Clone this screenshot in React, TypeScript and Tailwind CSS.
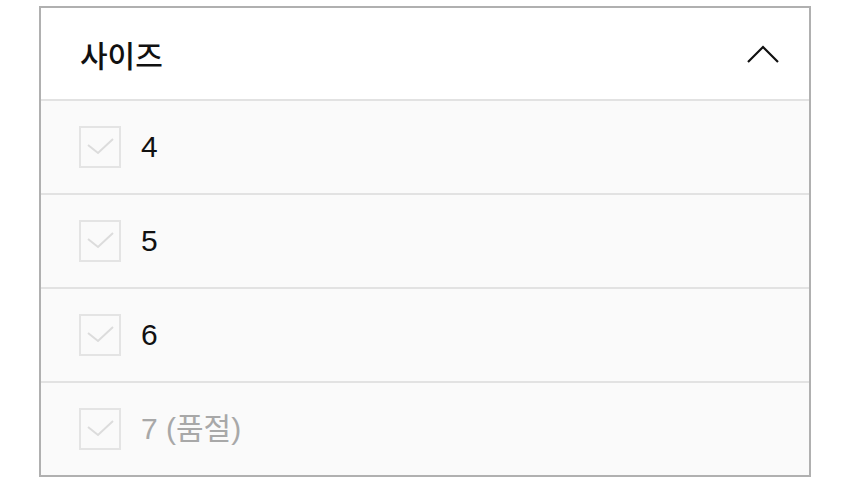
import React from 'react'

const sizes = [
    { label: '4', soldOut: false },
    { label: '5', soldOut: false },
    { label: '6', soldOut: false },
    { label: '7 (품절)', soldOut: true },
]

function CheckBox() {
    return (
        <div className="w-[42px] h-[42px] border-2 border-[#e4e4e4] bg-[#fafafa] flex-shrink-0">
            <svg width="38" height="38" viewBox="0 0 38 38" fill="none">
                <polyline points="7,17 17,25 32,11" stroke="#dcdcdc" strokeWidth="2" fill="none"/>
            </svg>
        </div>
    )
}

function App() {
    return (
        <div className="w-[850px] h-[486px] bg-white pt-[6px] pl-[39px]" style={{ fontFamily: '"Liberation Sans", "Noto Sans CJK KR", sans-serif' }}>
            <div className="w-[772px] border-2 border-[#b0b0b0] flex flex-col">
                <div className="h-[93px] flex items-center justify-between pl-[39px] pr-[29px] bg-white border-b-2 border-[#e2e2e2]">
                    <span className="text-[30px] font-medium text-[#111] leading-none" style={{ fontFamily: '"Noto Sans CJK KR", sans-serif' }}>사이즈</span>
                    <svg width="34" height="20" viewBox="0 0 34 20" fill="none">
                        <polyline points="2,18 17,3 32,18" stroke="#111" strokeWidth="2.2" fill="none"/>
                    </svg>
                </div>
                {sizes.map((s, i) => (
                    <div key={s.label} className={"flex items-center pl-[38px] bg-[#fafafa] " + (i < sizes.length - 1 ? 'h-[94px] border-b-2 border-[#e2e2e2]' : 'h-[92px]')}>
                        <CheckBox/>
                        <span className={"ml-[20px] text-[30px] leading-none " + (s.soldOut ? 'text-[#a8a8a8]' : 'text-[#111]')}>{s.label}</span>
                    </div>
                ))}
            </div>
        </div>
    )
}

export default App
